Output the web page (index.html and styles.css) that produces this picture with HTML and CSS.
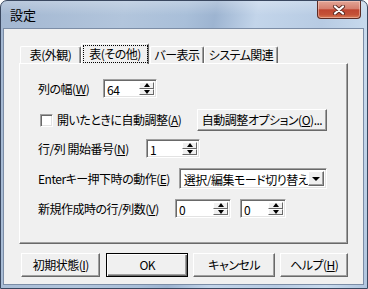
FILE: index.html
```html
<!DOCTYPE html>
<html lang="ja">
<head>
<meta charset="utf-8">
<title>設定</title>
<link rel="stylesheet" href="styles.css">
</head>
<body>
<div class="window">
  <div class="titlebar">
    <span class="title">設定</span>
    <div class="close">
      <svg width="14" height="10" viewBox="0 0 14 10">
        <path d="M3 1.5 L11 8.5 M11 1.5 L3 8.5" stroke="#5a2a22" stroke-width="4" stroke-linecap="round" fill="none"/>
        <path d="M3 1.5 L11 8.5 M11 1.5 L3 8.5" stroke="#ffffff" stroke-width="2.2" stroke-linecap="round" fill="none"/>
      </svg>
    </div>
  </div>
  <div class="client">
    <div class="tabs">
      <div class="tab t1">表(外観)</div>
      <div class="tab sel"><span class="focus">表(その他)</span></div>
      <div class="tab t3">バー表示</div>
      <div class="tab t4">システム関連</div>
    </div>
    <div class="panel">
      <div class="row r1">
        <span class="lbl l1">列の幅(<u>W</u>)</span>
        <div class="edit spin s1"><span class="val">64</span><div class="spinbtns"><span class="sb"><i class="up"></i></span><span class="sb"><i class="down"></i></span></div></div>
      </div>
      <div class="row r2">
        <span class="check"></span>
        <span class="lbl cl">開いたときに自動調整(<u>A</u>)</span>
        <div class="btn optbtn">自動調整オプション(<u>O</u>)...</div>
      </div>
      <div class="row r3">
        <span class="lbl l3">行/列 開始番号(<u>N</u>)</span>
        <div class="edit spin s1"><span class="val">1</span><div class="spinbtns"><span class="sb"><i class="up"></i></span><span class="sb"><i class="down"></i></span></div></div>
      </div>
      <div class="row r4">
        <span class="lbl l4">Enterキー押下時の動作(<u>E</u>)</span>
        <div class="edit combo"><span class="cval">選択/編集モード切り替え</span><span class="drop"><i class="down big"></i></span></div>
      </div>
      <div class="row r5">
        <span class="lbl l5">新規作成時の行/列数(<u>V</u>)</span>
        <div class="edit spin s5a"><span class="val">0</span><div class="spinbtns"><span class="sb"><i class="up"></i></span><span class="sb"><i class="down"></i></span></div></div>
        <div class="edit spin s5b"><span class="val">0</span><div class="spinbtns"><span class="sb"><i class="up"></i></span><span class="sb"><i class="down"></i></span></div></div>
      </div>
    </div>
    <div class="buttons">
      <div class="btn b1">初期状態(<u>I</u>)</div>
      <div class="btn def b2">OK</div>
      <div class="btn b3">キャンセル</div>
      <div class="btn b4">ヘルプ(<u>H</u>)</div>
    </div>
  </div>
</div>
</body>
</html>
```

FILE: styles.css
```css
* { box-sizing: border-box; }
html, body { margin: 0; padding: 0; }
body {
  width: 368px;
  height: 289px;
  overflow: hidden;
  background: #ffffff;
  font-family: "Noto Sans CJK JP", "Noto Sans", sans-serif;
  font-size: 12px;
  font-feature-settings: "palt" 1;
  letter-spacing: -0.5px;
  color: #000;
}
u { text-decoration: underline; text-underline-offset: 1px; }

.window {
  width: 368px;
  height: 289px;
  border: 1px solid #3a4860;
  border-radius: 7px 7px 0 0;
  display: flex;
  flex-direction: column;
  padding: 0 3px 3px 2px;
  background:
    linear-gradient(180deg, rgba(255,255,255,0.25) 0px, rgba(255,255,255,0) 14px),
    linear-gradient(100deg, #a3b7d1 0%, #b2c5dc 30%, #a9bfd9 45%, #9db4d1 52%, #c3d5ea 62%, #b7cbe3 78%, #c9dbee 90%, #b0c5de 100%);
}

.titlebar {
  height: 27px;
  display: flex;
  align-items: flex-start;
}
.title {
  margin-left: 7px;
  margin-top: 6px;
  font-size: 13px;
  line-height: 16px;
  letter-spacing: 0;
  color: #000;
  font-feature-settings: normal;
}
.close {
  margin-left: auto;
  margin-right: 3px;
  width: 44px;
  height: 18px;
  border: 1px solid #5b2b24;
  border-top: none;
  border-radius: 0 0 4px 4px;
  background: linear-gradient(180deg, #e2a596 0%, #d5806f 45%, #bf4631 52%, #c45237 80%, #d77a55 100%);
  box-shadow: inset 0 0 0 1px rgba(255,220,210,0.45);
  display: flex;
  align-items: center;
  justify-content: center;
}
.close svg { display: block; }

.client {
  flex: 1;
  border: 1px solid #7c8da6;
  background: #f0f0f0;
  padding: 14px 15px 0 15px;
  display: flex;
  flex-direction: column;
}

.tabs {
  height: 20px;
  display: flex;
  align-items: flex-end;
  padding-left: 1px;
}
.tab {
  height: 17px;
  border-top: 1px solid #ffffff;
  border-left: 1px solid #ffffff;
  border-right: 1px solid #696969;
  border-radius: 2px 2px 0 0;
  box-shadow: inset -1px 0 0 #a0a0a0;
  background: #f0f0f0;
  display: flex;
  align-items: center;
  justify-content: center;
  line-height: 14px;
  white-space: nowrap;
}
.t1 { width: 61px; }
.t3 { width: 54px; margin-left: 1px; }
.t4 { width: 74px; }
.sel {
  width: 68px;
  height: 21px;
  margin-bottom: -1px;
  position: relative;
  z-index: 1;
  align-items: flex-start;
  padding-top: 1px;
}
.focus {
  width: 65px;
  height: 18px;
  border: 1px dotted #000;
  display: flex;
  align-items: center;
  justify-content: center;
}

.panel {
  height: 181px;
  border: 1px solid;
  border-color: #ffffff #696969 #696969 #ffffff;
  box-shadow: inset -1px -1px 0 #a0a0a0;
  padding: 15px 20px 0 18px;
  display: flex;
  flex-direction: column;
}
.row {
  display: flex;
  align-items: center;
}
.r1 { height: 19px; }
.r2 { height: 22px; margin-top: 11px; }
.r3 { height: 19px; margin-top: 8px; }
.r4 { height: 21px; margin-top: 10px; }
.r5 { height: 19px; margin-top: 10px; }

.lbl { white-space: nowrap; line-height: 14px; }
.l1 { width: 65px; }
.l3 { width: 108px; }
.l4 { width: 146px; }
.l5 { width: 137px; }
.cl { margin-left: 4px; }

.check {
  width: 13px;
  height: 13px;
  margin-left: 2px;
  background: #fff;
  border: 1px solid;
  border-color: #a0a0a0 #ffffff #ffffff #a0a0a0;
  box-shadow: inset 1px 1px 0 #696969, inset -1px -1px 0 #e3e3e3;
}

.edit {
  height: 100%;
  background: #fff;
  border: 1px solid;
  border-color: #a0a0a0 #ffffff #ffffff #a0a0a0;
  box-shadow: inset 1px 1px 0 #696969, inset -1px -1px 0 #e3e3e3;
  display: flex;
  padding: 2px;
}
.s1 { width: 54px; }
.s5a { width: 56px; }
.s5b { width: 46px; margin-left: 9px; }
.val {
  flex: 1;
  line-height: 15px;
  padding-left: 1px;
}
.spinbtns {
  width: 15px;
  display: flex;
  flex-direction: column;
}
.sb {
  flex: 1;
  background: #f0f0f0;
  border: 1px solid;
  border-color: #ffffff #696969 #696969 #ffffff;
  display: flex;
  align-items: center;
  justify-content: center;
}
.up {
  width: 0; height: 0;
  border-left: 3px solid transparent;
  border-right: 3px solid transparent;
  border-bottom: 4px solid #000;
}
.down {
  width: 0; height: 0;
  border-left: 3px solid transparent;
  border-right: 3px solid transparent;
  border-top: 4px solid #000;
}
.down.big {
  border-left-width: 4px;
  border-right-width: 4px;
  border-top-width: 4px;
}

.combo { width: 150px; }
.cval {
  flex: 1;
  overflow: hidden;
  white-space: nowrap;
  line-height: 17px;
  padding-left: 2px;
}
.drop {
  width: 16px;
  background: #f0f0f0;
  border: 1px solid;
  border-color: #ffffff #696969 #696969 #ffffff;
  box-shadow: inset -1px -1px 0 #a0a0a0;
  display: flex;
  align-items: center;
  justify-content: center;
}

.btn {
  height: 100%;
  background: #f0f0f0;
  border: 1px solid;
  border-color: #ffffff #696969 #696969 #ffffff;
  box-shadow: inset -1px -1px 0 #a0a0a0;
  display: flex;
  align-items: center;
  justify-content: center;
  white-space: nowrap;
  line-height: 14px;
}
.optbtn { width: 130px; margin-left: auto; }

.buttons {
  margin-top: 9px;
  height: 24px;
  display: flex;
  gap: 5px;
  padding-left: 2px;
}
.b1 { width: 80px; }
.b2 { width: 82px; margin-left: 1px; }
.b3 { width: 83px; }
.b4 { width: 68px; }
.def {
  border: 1px solid #000;
  box-shadow: inset 1px 1px 0 #ffffff, inset -1px -1px 0 #696969, inset -2px -2px 0 #a0a0a0;
}
```
